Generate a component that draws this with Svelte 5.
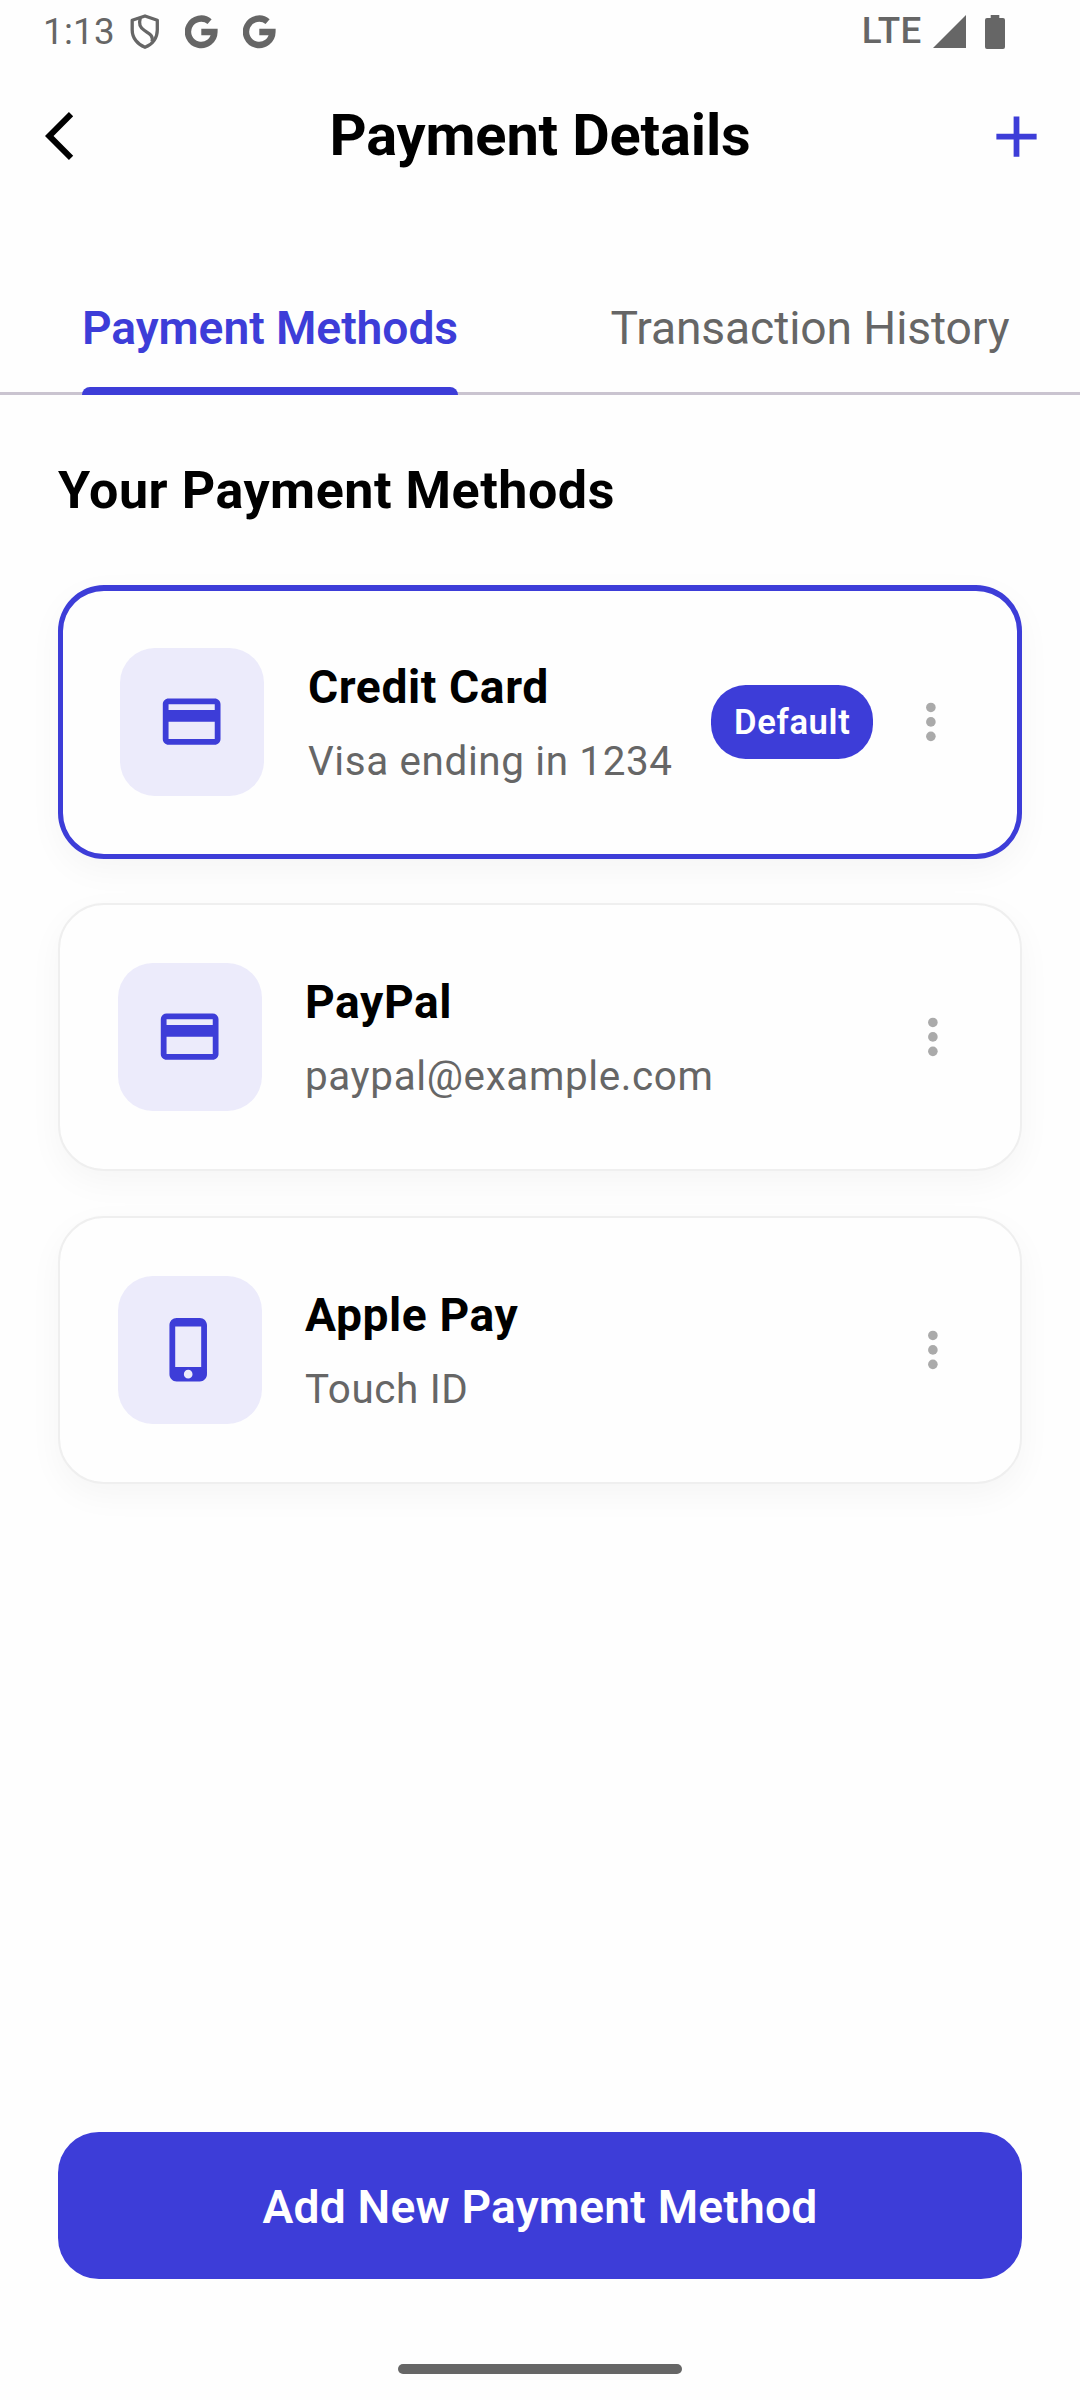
<script>
  const methods = [
    { title: 'Credit Card', detail: 'Visa ending in 1234', icon: 'card', isDefault: true },
    { title: 'PayPal', detail: 'paypal@example.com', icon: 'card', isDefault: false },
    { title: 'Apple Pay', detail: 'Touch ID', icon: 'phone', isDefault: false },
  ];

  const paths = {
    card: 'M20 4H4c-1.11 0-1.99.89-1.99 2L2 18c0 1.11.89 2 2 2h16c1.11 0 2-.89 2-2V6c0-1.11-.89-2-2-2zm0 14H4v-6h16v6zm0-10H4V6h16v2z',
    phone: 'M15.5 1h-8C6.12 1 5 2.12 5 3.5v17C5 21.88 6.12 23 7.5 23h8c1.38 0 2.5-1.12 2.5-2.5v-17C18 2.12 16.88 1 15.5 1zm-4 21c-.83 0-1.5-.67-1.5-1.5s.67-1.5 1.5-1.5 1.5.67 1.5 1.5-.67 1.5-1.5 1.5zm4.5-4H7V4h9v14z',
  };
</script>

{#snippet google()}
  <svg class="google" viewBox="0 0 33 34" aria-hidden="true">
    <path d="M24.6 6.6A13.2 13.2 0 1 0 29.4 17H16.3" fill="none" stroke="currentColor" stroke-width="6.4" />
  </svg>
{/snippet}

<div class="screen">
  <div class="status">
    <span class="time">1:13</span>
    <svg class="shield" viewBox="0 0 30 36" aria-hidden="true">
      <g fill="none" stroke="currentColor" stroke-width="3.3" stroke-linejoin="round">
        <path d="M15 2L27.3 6.3V16C27.3 24 22.5 30.5 15 33.3C7.5 30.5 2.2 24 2.2 16V6.3Z" />
        <path d="M10.3 3.8C8.5 10.5 10 13.5 14.5 16.5C20 20 23.3 21.5 22 27.5" />
      </g>
    </svg>
    {@render google()}
    {@render google()}
    <span class="spacer"></span>
    <span class="lte">LTE</span>
    <svg class="signal" viewBox="0 0 33 33" aria-hidden="true"><path d="M33 0V33H0Z" fill="currentColor" /></svg>
    <svg class="battery" viewBox="0 0 20 34" aria-hidden="true">
      <path d="M5.7 0h8.6v3H18a2 2 0 0 1 2 2v27a2 2 0 0 1-2 2H2a2 2 0 0 1-2-2V5a2 2 0 0 1 2-2h3.7z" fill="currentColor" />
    </svg>
  </div>

  <header class="header">
    <svg class="back" viewBox="0 0 24 24" aria-label="Back"><path d="M11.67 3.87L9.9 2.1 0 12l9.9 9.9 1.77-1.77L3.54 12z" /></svg>
    <h1>Payment Details</h1>
    <svg class="plus" viewBox="0 0 24 24" aria-label="Add"><path d="M19 13h-6v6h-2v-6H5v-2h6V5h2v6h6v2z" /></svg>
  </header>

  <nav class="tabs">
    <div class="tab active"><span class="label">Payment Methods</span></div>
    <div class="tab"><span class="label">Transaction History</span></div>
  </nav>

  <main class="content">
    <h2>Your Payment Methods</h2>
    <div class="list">
      {#each methods as method}
        <article class="card" class:selected={method.isDefault}>
          <div class="icon-box">
            <svg viewBox="0 0 24 24" aria-hidden="true"><path d={paths[method.icon]} /></svg>
          </div>
          <div class="info">
            <span class="name">{method.title}</span>
            <span class="detail">{method.detail}</span>
          </div>
          {#if method.isDefault}
            <span class="badge">Default</span>
          {/if}
          <svg class="more" viewBox="0 0 24 24" aria-label="More options">
            <circle cx="12" cy="6" r="2" /><circle cx="12" cy="12" r="2" /><circle cx="12" cy="18" r="2" />
          </svg>
        </article>
      {/each}
    </div>
  </main>

  <footer class="footer">
    <button type="button">Add New Payment Method</button>
    <div class="home"></div>
  </footer>
</div>

<style>
  :global(body) {
    margin: 0;
    background: #fefefe;
  }

  .screen {
    box-sizing: border-box;
    display: flex;
    flex-direction: column;
    width: 1080px;
    height: 2400px;
    background: #fefefe;
    color: #000;
    font-family: Roboto, sans-serif;
    overflow: hidden;
  }

  svg {
    display: block;
    flex: none;
    fill: currentColor;
  }

  .status {
    display: flex;
    align-items: center;
    height: 63px;
    padding: 0 75px 0 43px;
    color: #666;
  }

  .time {
    width: 87px;
    font-size: 36.75px;
    line-height: 63px;
    letter-spacing: 0.26px;
  }

  .shield {
    width: 30px;
    height: 36px;
  }

  .google {
    width: 33px;
    height: 34px;
    margin-left: 25px;
  }

  .spacer {
    flex: 1;
  }

  .lte {
    padding-bottom: 1px;
    font-size: 36.75px;
    font-weight: 500;
    line-height: 60px;
    letter-spacing: 0.6px;
  }

  .signal {
    width: 33px;
    height: 33px;
    margin-left: 11px;
  }

  .battery {
    width: 20px;
    height: 34px;
    margin-left: 19px;
  }

  .header {
    display: grid;
    grid-template-columns: 1fr auto 1fr;
    align-items: center;
    height: 146px;
    padding: 0 29px;
  }

  .back {
    width: 58px;
    height: 58px;
    margin-left: 16px;
  }

  h1 {
    margin: 0;
    padding-bottom: 2px;
    font-size: 57.75px;
    font-weight: 700;
    line-height: 72px;
    letter-spacing: -0.15px;
  }

  .plus {
    justify-self: end;
    width: 69px;
    height: 69px;
    color: #3d3dd8;
  }

  .tabs {
    display: flex;
    box-sizing: border-box;
    height: 135px;
    margin-top: 51px;
    padding-top: 1px;
    box-shadow: inset 0 -3px #cac4d0;
  }

  .tab {
    display: flex;
    flex: 1;
    justify-content: center;
    color: #666;
    font-size: 46.2px;
    line-height: 134px;
    letter-spacing: -0.1px;
  }

  .label {
    position: relative;
  }

  .active {
    color: #3d3dd8;
    font-weight: 600;
    letter-spacing: -0.06px;
  }

  .active .label::after {
    content: '';
    position: absolute;
    right: 0;
    bottom: 0;
    left: 0;
    height: 8px;
    border-radius: 8px 8px 0 0;
    background: #3d3dd8;
  }

  .content {
    flex: 1;
    padding: 64px 58px 0;
  }

  h2 {
    margin: 0 0 63px;
    font-size: 52px;
    font-weight: 700;
    line-height: 63px;
    letter-spacing: 0.53px;
  }

  .list {
    display: flex;
    flex-direction: column;
    gap: 45px;
  }

  .card {
    display: flex;
    align-items: center;
    box-sizing: border-box;
    height: 268px;
    padding: 58px;
    border: 2px solid #efefef;
    border-radius: 46px;
    background: #fefefe;
    box-shadow: 0 11px 34px rgba(0, 0, 0, 0.04);
  }

  .card.selected {
    height: 274px;
    margin-bottom: -1px;
    padding: 57px 57px 58px;
    border: 5px solid #3d3dd8;
    border-top-width: 6px;
  }

  .icon-box {
    display: flex;
    flex: none;
    align-items: center;
    justify-content: center;
    width: 144px;
    height: 148px;
    border-radius: 34.65px;
    background: #ecebfb;
    color: #3d3dd8;
  }

  .icon-box svg {
    width: 69.3px;
    height: 69.3px;
  }

  .info {
    display: flex;
    flex: 1;
    flex-direction: column;
    height: 148px;
    margin-left: 43px;
    white-space: nowrap;
  }

  .selected .info {
    margin-left: 44px;
  }

  .name {
    font-size: 46.2px;
    font-weight: 700;
    line-height: 78px;
    letter-spacing: 0.58px;
  }

  .detail {
    color: #666;
    font-size: 40.4px;
    line-height: 71px;
    letter-spacing: 0.63px;
  }

  .badge {
    box-sizing: border-box;
    width: 162px;
    height: 74px;
    margin-right: 29px;
    border-radius: 34.65px;
    background: #3d3dd8;
    color: #fff;
    font-size: 34.65px;
    font-weight: 600;
    line-height: 74px;
    letter-spacing: 0.6px;
    text-align: center;
  }

  .more {
    width: 57.75px;
    height: 57.75px;
    color: #aaa;
  }

  .footer {
    display: flex;
    flex-direction: column;
    align-items: center;
    padding: 0 58px 26px;
  }

  button {
    box-sizing: border-box;
    width: 964px;
    height: 147px;
    padding: 3px 0 0;
    border: 0;
    border-radius: 41px;
    background: #3d3dd8;
    color: #fff;
    font-family: inherit;
    font-size: 46.2px;
    font-weight: 600;
    line-height: 144px;
    letter-spacing: 0.2px;
  }

  .home {
    width: 284px;
    height: 10px;
    margin-top: 85px;
    border-radius: 5px;
    background: #666;
  }
</style>
